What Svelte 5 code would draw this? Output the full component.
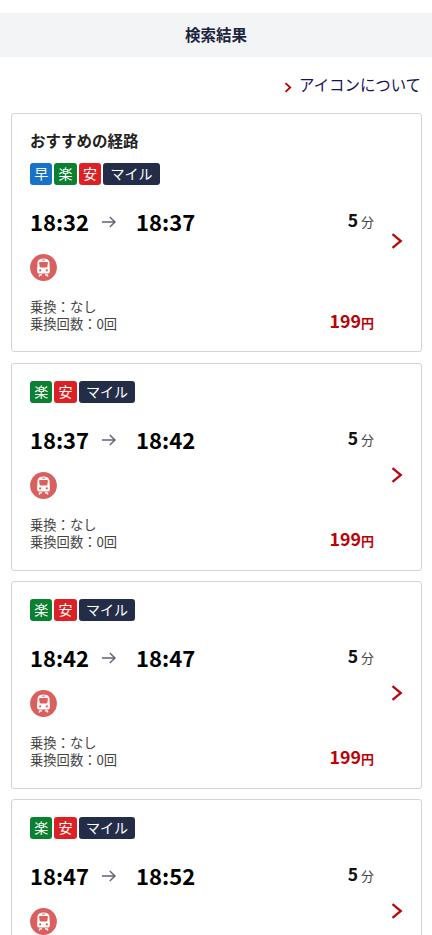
<script lang="ts">
    type Tag = 'fast' | 'easy' | 'cheap' | 'mile';

    interface Route {
        heading?: string;
        tags: Tag[];
        depart: string;
        arrive: string;
        minutes: number;
        transfers: number;
        fare: number;
    }

    const tagLabels: Record<Tag, string> = {
        fast: '早',
        easy: '楽',
        cheap: '安',
        mile: 'マイル'
    };

    const routes: Route[] = [
        { heading: 'おすすめの経路', tags: ['fast', 'easy', 'cheap', 'mile'], depart: '18:32', arrive: '18:37', minutes: 5, transfers: 0, fare: 199 },
        { tags: ['easy', 'cheap', 'mile'], depart: '18:37', arrive: '18:42', minutes: 5, transfers: 0, fare: 199 },
        { tags: ['easy', 'cheap', 'mile'], depart: '18:42', arrive: '18:47', minutes: 5, transfers: 0, fare: 199 },
        { tags: ['easy', 'cheap', 'mile'], depart: '18:47', arrive: '18:52', minutes: 5, transfers: 0, fare: 199 }
    ];
</script>

<div class="screen">
    <header class="title-bar">
        <h1>検索結果</h1>
    </header>

    <div class="help">
        <svg width="8" height="11" viewBox="0 0 8 11" aria-hidden="true">
            <path d="M1.5 1.2 6.2 5.5 1.5 9.8" fill="none" stroke="#bb0000" stroke-width="1.8" />
        </svg>
        <span>アイコンについて</span>
    </div>

    <main class="routes">
        {#each routes as route}
            <article class="card" class:recommended={route.heading}>
                <div class="info">
                    {#if route.heading}
                        <h2>{route.heading}</h2>
                    {/if}
                    <div class="tags">
                        {#each route.tags as tag}
                            <span class="tag {tag}">{tagLabels[tag]}</span>
                        {/each}
                    </div>
                    <div class="times">
                        <span class="time">{route.depart}</span>
                        <svg class="arrow" width="14" height="12" viewBox="0 0 14 12" aria-hidden="true">
                            <path d="M0 6H13M7.8 .9 13 6 7.8 11.1" fill="none" stroke="#5d6475" stroke-width="1.4" />
                        </svg>
                        <span class="time">{route.arrive}</span>
                        <span class="duration"><b>{route.minutes}</b>分</span>
                    </div>
                    <svg class="train" width="27" height="27" viewBox="0 0 27 27" aria-hidden="true">
                        <circle cx="13.5" cy="13.5" r="13.4" fill="#d9605e" />
                        <path d="M9.7 5.3Q13.5 3.7 17.3 5.3Q19.2 6.2 19.4 8.2L19.9 16.9Q19.9 19.6 17.3 19.6H9.7Q7.1 19.6 7.1 16.9L7.6 8.2Q7.8 6.2 9.7 5.3Z" fill="#fff" />
                        <path d="M11.8 6.1H15.2" stroke="#d9605e" stroke-width=".9" />
                        <path d="M10 8H17Q17.9 8 17.9 8.8L17.4 12.2Q17.2 13.4 16 13.4H11Q9.8 13.4 9.6 12.2L9.1 8.8Q9.1 8 10 8Z" fill="#d9605e" />
                        <circle cx="10.2" cy="16.4" r="1.1" fill="#d9605e" />
                        <circle cx="16.8" cy="16.4" r="1.1" fill="#d9605e" />
                        <path d="M10.5 20.2 9 22.4M16.5 20.2 18 22.4M10 20.9H12M15 20.9H17" stroke="#fff" stroke-width="1.4" />
                    </svg>
                    <div class="bottom">
                        <p>乗換：なし<br />乗換回数：{route.transfers}回</p>
                        <div class="fare">{route.fare}<small>円</small></div>
                    </div>
                </div>
                <svg class="chevron" width="12" height="16" viewBox="0 0 12 16" aria-hidden="true">
                    <path d="M1.5 1.2 9.8 8 1.5 14.8" fill="none" stroke="#b90a12" stroke-width="2.3" />
                </svg>
            </article>
        {/each}
    </main>
</div>

<style>
    :global(body) {
        background: #fff;
    }

    .screen {
        box-sizing: border-box;
        height: 935px;
        padding-top: 13px;
        overflow: hidden;
        color: #111;
        font-family: "Noto Sans CJK JP", sans-serif;
    }

    h1,
    h2,
    p {
        margin: 0;
    }

    .title-bar {
        height: 44px;
        background: #f3f4f6;
        text-align: center;
    }
    h1 {
        color: #1c2540;
        font-size: 15.5px;
        font-weight: 700;
        line-height: 42px;
    }

    .help {
        display: flex;
        align-items: center;
        justify-content: flex-end;
        gap: 7px;
        height: 56px;
        padding-right: 11px;
        color: #17125f;
        font-size: 15.4px;
    }
    .help span {
        line-height: 52px;
        margin-bottom: 2px;
    }
    .help svg {
        margin-top: 4px;
    }

    .routes {
        display: flex;
        flex-direction: column;
        gap: 10px;
        padding: 0 10px 0 11px;
    }

    .card {
        box-sizing: border-box;
        display: flex;
        flex-shrink: 0;
        align-items: center;
        justify-content: space-between;
        height: 208px;
        padding: 0 18px;
        border: 1px solid #d4d4d4;
        border-radius: 3px;
    }
    .card.recommended {
        height: 239px;
        margin-bottom: 1px;
    }

    .info {
        width: 344px;
        height: 100%;
        padding-top: 17.4px;
        box-sizing: border-box;
    }
    .recommended .info {
        padding-top: 14.4px;
    }

    h2 {
        height: 35px;
        color: #222;
        font-size: 15.5px;
        font-weight: 700;
        line-height: 25px;
    }

    .tags {
        display: flex;
        gap: 2px;
        height: 22px;
    }
    .tag {
        box-sizing: border-box;
        width: 22.4px;
        border-radius: 3px;
        color: #fff;
        font-size: 14px;
        line-height: 20px;
        text-align: center;
    }
    .fast { background: #1673c8; }
    .easy { background: #0b8030; }
    .cheap { background: #dc2024; }
    .mile {
        width: 56.5px;
        background: #242d48;
    }

    .times {
        display: flex;
        align-items: center;
        height: 32px;
        margin-top: 19.6px;
    }
    .time {
        color: #000;
        font-size: 22px;
        font-weight: 700;
        line-height: 32px;
    }
    .arrow {
        margin: 2px 20px 0 13px;
    }
    .duration {
        margin: -3px 0 0 auto;
        color: #444;
        font-size: 13px;
    }
    .duration b {
        margin-right: 3px;
        color: #111;
        font-size: 17.5px;
    }

    .train {
        display: block;
        margin-top: 17px;
    }

    .bottom {
        display: flex;
        align-items: flex-start;
        justify-content: space-between;
        margin-top: 17px;
    }
    p {
        color: #444;
        font-size: 13.3px;
        line-height: 17.3px;
    }
    .fare {
        margin-top: 7px;
        color: #bb0008;
        font-size: 17.8px;
        font-weight: 700;
        line-height: 30px;
    }
    .fare small {
        font-size: 13px;
    }

    .chevron {
        flex-shrink: 0;
        margin-top: 16px;
    }
</style>
